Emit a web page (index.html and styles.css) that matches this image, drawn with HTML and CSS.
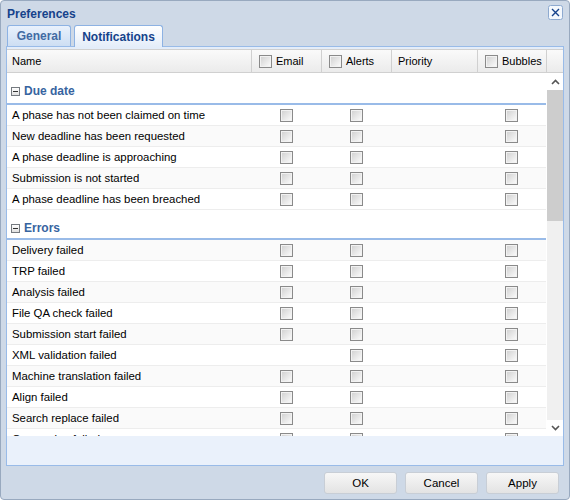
FILE: index.html
```html
<!DOCTYPE html>
<html>
<head>
<meta charset="utf-8">
<link rel="stylesheet" href="styles.css">
</head>
<body>
<div class="win">
  <div class="titlebar">
    <span class="title">Preferences</span>
    <span class="close"><svg width="15" height="15" viewBox="0 0 15 15"><rect x="0.5" y="0.5" width="14" height="14" rx="2" fill="#f4f8fd" stroke="#8eaad0"/><path d="M4 4 L11 11 M11 4 L4 11" stroke="#15428b" stroke-width="1.4"/></svg></span>
  </div>
  <div class="tabs">
    <div class="tab">General</div>
    <div class="tab active">Notifications</div>
  </div>
  <div class="panel">
    <div class="strip"></div>
    <div class="hdr">
      <div class="hc name">Name</div>
      <div class="hc"><span class="cb"></span>Email</div>
      <div class="hc"><span class="cb"></span>Alerts</div>
      <div class="hc">Priority</div>
      <div class="hc"><span class="cb"></span>Bubbles</div>
      <div class="hc fill"></div>
    </div>
    <div class="bodywrap">
      <div class="rows">
        <div class="group first"><span class="tog"></span>Due date</div>
        <div class="row"><div class="c name">A phase has not been claimed on time</div><div class="c"><span class="cb"></span></div><div class="c"><span class="cb"></span></div><div class="c"></div><div class="c"><span class="cb"></span></div></div>
        <div class="row alt"><div class="c name">New deadline has been requested</div><div class="c"><span class="cb"></span></div><div class="c"><span class="cb"></span></div><div class="c"></div><div class="c"><span class="cb"></span></div></div>
        <div class="row"><div class="c name">A phase deadline is approaching</div><div class="c"><span class="cb"></span></div><div class="c"><span class="cb"></span></div><div class="c"></div><div class="c"><span class="cb"></span></div></div>
        <div class="row alt"><div class="c name">Submission is not started</div><div class="c"><span class="cb"></span></div><div class="c"><span class="cb"></span></div><div class="c"></div><div class="c"><span class="cb"></span></div></div>
        <div class="row"><div class="c name">A phase deadline has been breached</div><div class="c"><span class="cb"></span></div><div class="c"><span class="cb"></span></div><div class="c"></div><div class="c"><span class="cb"></span></div></div>
        <div class="group"><span class="tog"></span>Errors</div>
        <div class="row alt"><div class="c name">Delivery failed</div><div class="c"><span class="cb"></span></div><div class="c"><span class="cb"></span></div><div class="c"></div><div class="c"><span class="cb"></span></div></div>
        <div class="row"><div class="c name">TRP failed</div><div class="c"><span class="cb"></span></div><div class="c"><span class="cb"></span></div><div class="c"></div><div class="c"><span class="cb"></span></div></div>
        <div class="row alt"><div class="c name">Analysis failed</div><div class="c"><span class="cb"></span></div><div class="c"><span class="cb"></span></div><div class="c"></div><div class="c"><span class="cb"></span></div></div>
        <div class="row"><div class="c name">File QA check failed</div><div class="c"><span class="cb"></span></div><div class="c"><span class="cb"></span></div><div class="c"></div><div class="c"><span class="cb"></span></div></div>
        <div class="row alt"><div class="c name">Submission start failed</div><div class="c"><span class="cb"></span></div><div class="c"><span class="cb"></span></div><div class="c"></div><div class="c"><span class="cb"></span></div></div>
        <div class="row"><div class="c name">XML validation failed</div><div class="c"></div><div class="c"><span class="cb"></span></div><div class="c"></div><div class="c"><span class="cb"></span></div></div>
        <div class="row alt"><div class="c name">Machine translation failed</div><div class="c"><span class="cb"></span></div><div class="c"><span class="cb"></span></div><div class="c"></div><div class="c"><span class="cb"></span></div></div>
        <div class="row"><div class="c name">Align failed</div><div class="c"><span class="cb"></span></div><div class="c"><span class="cb"></span></div><div class="c"></div><div class="c"><span class="cb"></span></div></div>
        <div class="row alt"><div class="c name">Search replace failed</div><div class="c"><span class="cb"></span></div><div class="c"><span class="cb"></span></div><div class="c"></div><div class="c"><span class="cb"></span></div></div>
        <div class="row"><div class="c name">Conversion failed</div><div class="c"><span class="cb"></span></div><div class="c"><span class="cb"></span></div><div class="c"></div><div class="c"><span class="cb"></span></div></div>
      </div>
      <div class="scroll">
        <div class="arrow"><svg width="9" height="6" viewBox="0 0 9 6"><path d="M1 5 L4.5 1.5 L8 5" fill="none" stroke="#555" stroke-width="1.6"/></svg></div>
        <div class="thumb"></div>
        <div class="track"></div>
        <div class="arrow down"><svg width="9" height="6" viewBox="0 0 9 6"><path d="M1 1 L4.5 4.5 L8 1" fill="none" stroke="#555" stroke-width="1.6"/></svg></div>
      </div>
    </div>
    <div class="empty"></div>
  </div>
  <div class="footer">
    <button class="btn">OK</button>
    <button class="btn">Cancel</button>
    <button class="btn">Apply</button>
  </div>
</div>
</body>
</html>
```

FILE: styles.css
```css
* { box-sizing: border-box; }
body { margin: 0; font-family: "Liberation Sans", Arial, sans-serif; font-size: 11px; }
.win {
  width: 570px; height: 500px;
  background: #ced9e7;
  border: 1px solid #98a9bf;
  border-radius: 4px;
  display: flex; flex-direction: column;
}
.titlebar {
  height: 24px; display: flex; align-items: center; justify-content: space-between;
  padding: 0 6px 0 6px;
}
.title { font-weight: bold; color: #15428b; font-size: 12px; margin-top: 1px; }
.close { display: flex; margin-top: -1px; }
.tabs { height: 21px; display: flex; gap: 3px; padding-left: 6px; align-items: flex-end; }
.tab {
  height: 21px; padding: 0 8px; display: flex; align-items: center;
  font-weight: bold; font-size: 12px; color: #416aa3;
  border: 1px solid #8db2e3; border-bottom: none;
  border-radius: 3px 3px 0 0;
  background: linear-gradient(#e9f1fc, #cddef3);
}
.tab:first-child { width: 64px; justify-content: center; }
.tab.active { color: #15428b; background: linear-gradient(#ffffff, #e4edf9); width: 89px; justify-content: center; height: 22px; margin-bottom: -1px; position: relative; z-index: 1; }
.panel {
  margin: 0 5px; height: 420px;
  border: 1px solid #99bbe8;
  background: #eaf1fb;
  display: flex; flex-direction: column;
}
.strip { height: 2px; background: #e4edf9; }
.hdr {
  display: flex; height: 24px;
  background: linear-gradient(#fafafa, #ebebeb);
  border-top: 1px solid #d0d0d0;
  border-bottom: 1px solid #d0d0d0;
}
.hc {
  width: 70px; border-right: 1px solid #d0d0d0;
  display: flex; align-items: center; padding-left: 7px; gap: 4px;
  font-size: 11px; color: #000;
}
.hc.name { width: 245px; padding-left: 5px; }
.hc:nth-child(4) { width: 86px; padding-left: 6px; }
.hc:nth-child(5) { width: 69px; padding-left: 7px; }
.hc.fill { flex: 1; border-right: none; }
.bodywrap { display: flex; height: 363px; background: #fff; }
.rows { width: 541px; overflow: hidden; }
.group {
  height: 30px; border-bottom: 2px solid #99bbe8;
  display: flex; align-items: center; padding: 8px 0 0 4px;
  font-weight: bold; font-size: 12px; color: #3764a0; gap: 4px;
}
.group.first { height: 32px; padding-top: 8px; padding-bottom: 2px; }
.tog {
  width: 9px; height: 9px; border: 1px solid #757a80; position: relative;
  background: linear-gradient(#fff, #e0e0e0);
}
.tog::after { content: ""; position: absolute; left: 1px; top: 3px; width: 5px; height: 1px; background: #333; }
.row { display: flex; height: 21px; border-bottom: 1px solid #ededed; background: #fff; }
.row.alt { background: #fafafa; }
.c { width: 70px; display: flex; align-items: center; justify-content: center; }
.c.name { width: 245px; justify-content: flex-start; padding-left: 5px; font-size: 11.4px; color: #000; white-space: nowrap; }
.c:nth-child(4) { width: 86px; }
.c:nth-child(5) { width: 69px; }
.cb {
  width: 13px; height: 13px; display: inline-block; flex: none;
  border: 1px solid #8a8a8a;
  background: linear-gradient(135deg, #cfcfcf, #fdfdfd);
  box-shadow: inset 0 0 0 1px #f2f2f2;
}
.scroll { width: 17px; display: flex; flex-direction: column; background: #fff; padding-left: 1px; }
.arrow { height: 17px; display: flex; align-items: center; justify-content: center; }
.thumb { height: 131px; background: #cdcdcd; }
.track { flex: 1; background: #f0f0f0; }
.arrow.down { background: #fff; height: 16px; }
.empty { flex: 1; }
.footer { flex: 1; display: flex; justify-content: flex-end; align-items: center; gap: 8px; padding: 1px 10px 0 0; }
.btn {
  width: 73px; height: 22px; font-family: inherit; font-size: 11.5px; color: #000;
  border: 1px solid #c8ced6; border-radius: 3px;
  background: linear-gradient(#f7f7f7, #e3e3e3);
  padding: 0;
}
```
